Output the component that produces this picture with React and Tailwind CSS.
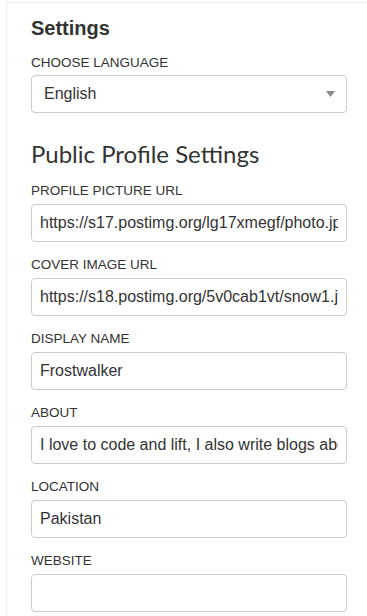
import React from "react";

const fields = [
  { label: "PROFILE PICTURE URL", value: "https://s17.postimg.org/lg17xmegf/photo.jpg" },
  { label: "COVER IMAGE URL", value: "https://s18.postimg.org/5v0cab1vt/snow1.jpg" },
  { label: "DISPLAY NAME", value: "Frostwalker" },
  { label: "ABOUT", value: "I love to code and lift, I also write blogs about programming" },
  { label: "LOCATION", value: "Pakistan" },
  { label: "WEBSITE", value: "" },
];

export default function App() {
  return (
    <div className="w-[367px] h-[616px] bg-white overflow-hidden pt-[2px] pl-[6px]" style={{ fontFamily: '"Liberation Sans", Arial, sans-serif' }}>
      <div className="border-t border-l border-[#eeeeee] h-full pl-[24px] pr-[20px] text-[#333333]">
        <h2 className="text-[20px] font-bold leading-[22px] mt-[14px] mb-0">Settings</h2>
        <label className="block text-[13.5px] leading-[15px] mt-[16px]">CHOOSE LANGUAGE</label>
        <div className="mt-[5px] h-[38px] border border-[#cccccc] rounded-[4px] flex items-center justify-between pl-[12px] pr-[11px]">
          <span className="text-[16px]">English</span>
          <svg width="9" height="6" viewBox="0 0 9 6"><path d="M0 0 L9 0 L4.5 6 Z" fill="#888" /></svg>
        </div>
        <h3 className="text-[24px] leading-[28px] mt-[27px] font-normal text-[#333]" style={{ fontFamily: 'Lato, "Open Sans", sans-serif' }}>Public Profile Settings</h3>
        {fields.map((f, i) => (
          <div key={i} className="mt-[15px]">
            <label className="block text-[13.5px] leading-[15px]">{f.label}</label>
            <input
              readOnly
              value={f.value}
              className="mt-[6px] block w-full h-[38px] border border-[#cccccc] rounded-[4px] px-[8px] text-[16px] text-[#333] outline-none"
              style={{ fontFamily: '"Liberation Sans", Arial, sans-serif' }}
            />
          </div>
        ))}
      </div>
    </div>
  );
}
